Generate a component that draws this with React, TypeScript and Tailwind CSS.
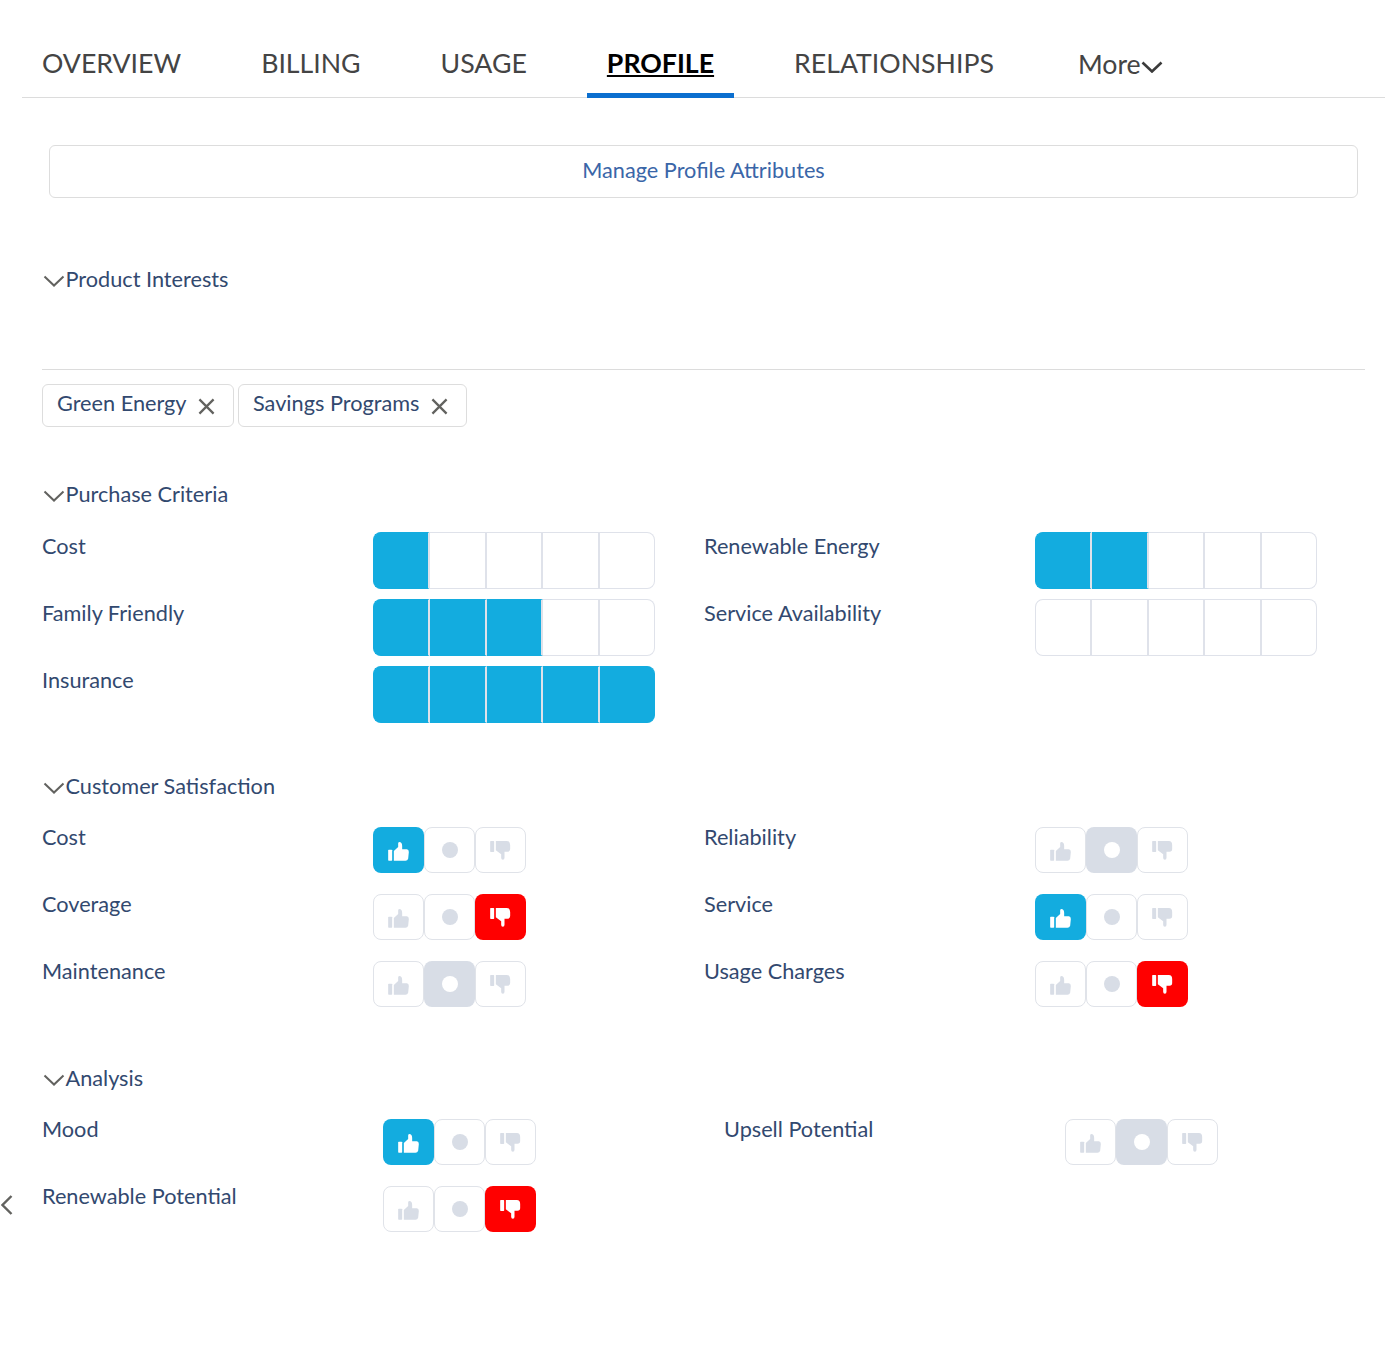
import type { ReactNode } from "react";

const tabs = ["OVERVIEW", "BILLING", "USAGE", "PROFILE", "RELATIONSHIPS"];

type Vote = "up" | "neutral" | "down";

function ThumbUp({ className }: { className: string }) {
  return (
    <svg viewBox="0 0 62 57" className={className} fill="currentColor">
      <rect x="0" y="23" width="12" height="33" rx="2" />
      <path d="M17 56V27L30 15V4Q30 0 35 0Q42 2 42 12V22H56Q62 22 62 30L60 50Q58 56 52 56Z" />
    </svg>
  );
}

function ThumbDown({ className }: { className: string }) {
  return (
    <svg viewBox="0 0 62 57" className={className} fill="currentColor">
      <rect x="0" y="0" width="12" height="33" rx="2" />
      <path d="M17 0H50Q60 0 60 12V24Q60 32 52 32H43V50Q43 56 38 56Q33 56 33 50V40L17 28Z" />
    </svg>
  );
}

function Caret({ className, weight = 2 }: { className: string; weight?: number }) {
  return (
    <svg viewBox="0 0 22 12" className={className} fill="none" stroke="currentColor" strokeWidth={weight}>
      <path d="M1.5 1.5L11 10.5L20.5 1.5" />
    </svg>
  );
}

function Cross({ className }: { className: string }) {
  return (
    <svg viewBox="0 0 18 18" className={className} fill="none" stroke="currentColor" strokeWidth="2.4">
      <path d="M1.5 1.5L16.5 16.5M16.5 1.5L1.5 16.5" />
    </svg>
  );
}

function VoteToggle({ value }: { value: Vote }) {
  const idle = "border border-[#e0e3e9] bg-white text-[#d8dde6]";
  return (
    <div className="mt-1 flex h-[46px]">
      <div className={`flex w-[51px] items-center justify-center rounded-lg ${value === "up" ? "bg-[#13acdf] text-white" : idle}`}>
        <ThumbUp className="mt-[3px] h-[19px] w-[21px]" />
      </div>
      <div className={`flex w-[51px] items-center justify-center rounded-lg ${value === "neutral" ? "bg-[#d8dde6]" : idle}`}>
        <span className={`h-4 w-4 rounded-full ${value === "neutral" ? "bg-white" : "bg-[#d8dde6]"}`} />
      </div>
      <div className={`flex w-[51px] items-center justify-center rounded-lg ${value === "down" ? "bg-[#ff0000] text-white" : idle}`}>
        <ThumbDown className="h-[19px] w-[21px]" />
      </div>
    </div>
  );
}

function Meter({ filled }: { filled: number }) {
  return (
    <div className="flex h-[57px] w-[282px]">
      {[0, 1, 2, 3, 4].map((i) => (
        <div
          key={i}
          className={`flex-1 border-y border-r-2 border-[#dfe2ea] first:rounded-l-lg first:border-l last:rounded-r-lg last:border-r ${
            i < filled ? "border-y-[#13acdf] border-l-[#13acdf] bg-[#13acdf] last:border-r-[#13acdf]" : "bg-white"
          }`}
        />
      ))}
    </div>
  );
}

function Heading({ title }: { title: string }) {
  return (
    <div className="flex h-[30px] items-center text-[21.7px] leading-[30px] text-[#32496f]">
      <Caret className="ml-px mr-[0.5px] mt-[4px] h-3 w-[22px] shrink-0 text-[#62625f]" />
      <span>{title}</span>
    </div>
  );
}

function Row({ label, children, labelWidth = "w-[331px]" }: { label: string; children: ReactNode; labelWidth?: string }) {
  return (
    <div className="flex h-[67px]">
      <div className={`${labelWidth} -mt-px text-[21.7px] leading-[30px] text-[#32496f]`}>{label}</div>
      {children}
    </div>
  );
}

export default function App() {
  return (
    <div className="relative h-[1350px] w-[1397px] overflow-hidden bg-white font-['Lato',sans-serif]">
      <nav className="ml-[22px] mr-3 flex h-[98px] items-end gap-10 border-b border-[#dcdcdc] text-[26.7px] text-[#444444]">
        {tabs.map((t) => (
          <a
            key={t}
            className={`flex h-[66px] items-center px-5 ${
              t === "PROFILE"
                ? "-mb-px border-b-[5px] border-[#0b6fcf] pt-[1px] font-bold text-black underline"
                : "pb-px"
            }`}
          >
            {t}
          </a>
        ))}
        <a className="flex h-[66px] items-center pl-6">
          More
          <Caret className="mt-[5px] h-3 w-[22px] text-[#3b3b3b]" weight={2.6} />
        </a>
      </nav>

      <div className="pl-[42px] pr-8">
        <div className="mx-[7px] mt-[47px] flex h-[53px] items-center justify-center rounded-md border border-[#dddddd] pb-[3px] text-[21.7px] text-[#3a66a8]">
          Manage Profile Attributes
        </div>

        <div className="mt-[66px]">
          <Heading title="Product Interests" />
        </div>
        <div className="mt-[75px] border-t border-[#dcdcdc]" />
        <div className="mt-[14px] flex gap-1 text-[21.7px] text-[#32496f]">
          <div className="flex h-[43px] w-[192px] items-center justify-between rounded-md border border-[#dddddd] pb-[4px] pl-[14px] pr-[18px]">
            Green Energy
            <Cross className="mt-[5px] h-[17px] w-[17px] text-[#62625f]" />
          </div>
          <div className="flex h-[43px] w-[229px] items-center justify-between rounded-md border border-[#dddddd] pb-[4px] pl-[14px] pr-[18px]">
            Savings Programs
            <Cross className="mt-[5px] h-[17px] w-[17px] text-[#62625f]" />
          </div>
        </div>

        <div className="mt-[52px]">
          <Heading title="Purchase Criteria" />
        </div>
        <div className="mt-[23px] grid w-[1294px] grid-cols-[662px_632px]">
          <Row label="Cost"><Meter filled={1} /></Row>
          <Row label="Renewable Energy"><Meter filled={2} /></Row>
          <Row label="Family Friendly"><Meter filled={3} /></Row>
          <Row label="Service Availability"><Meter filled={0} /></Row>
          <Row label="Insurance"><Meter filled={5} /></Row>
        </div>

        <div className="mt-[38px]">
          <Heading title="Customer Satisfaction" />
        </div>
        <div className="mt-[22px] grid w-[1294px] grid-cols-[662px_632px]">
          <Row label="Cost"><VoteToggle value="up" /></Row>
          <Row label="Reliability"><VoteToggle value="neutral" /></Row>
          <Row label="Coverage"><VoteToggle value="down" /></Row>
          <Row label="Service"><VoteToggle value="up" /></Row>
          <Row label="Maintenance"><VoteToggle value="neutral" /></Row>
          <Row label="Usage Charges"><VoteToggle value="down" /></Row>
        </div>

        <div className="mt-[39px]">
          <Heading title="Analysis" />
        </div>
        <div className="mt-[22px] grid w-[1294px] grid-cols-[682px_612px]">
          <Row label="Mood" labelWidth="w-[341px]"><VoteToggle value="up" /></Row>
          <Row label="Upsell Potential" labelWidth="w-[341px]"><VoteToggle value="neutral" /></Row>
          <Row label="Renewable Potential" labelWidth="w-[341px]"><VoteToggle value="down" /></Row>
        </div>
      </div>

      <svg viewBox="0 0 12 20" className="absolute left-[1px] top-[1195px] h-5 w-3 text-[#62625f]" fill="none" stroke="currentColor" strokeWidth="2.4">
        <path d="M10.5 1L1.5 10L10.5 19" />
      </svg>
    </div>
  );
}
